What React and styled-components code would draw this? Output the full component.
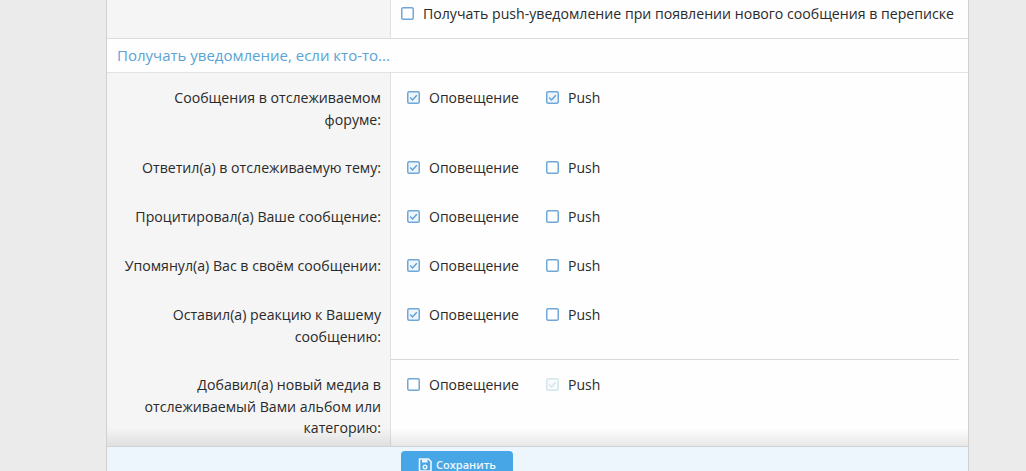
import React from "react";
import styled, { createGlobalStyle } from "styled-components";

const Global = createGlobalStyle`
  html, body { margin: 0; padding: 0; height: 471px; overflow: hidden; background: #ebebeb; }
  * { box-sizing: border-box; }
`;
const Page = styled.div`
  width: 1026px; height: 471px; overflow: hidden; padding: 0 57px 0 106px; position: relative;
  font: 14px/21.5px "Open Sans", "Noto Sans", sans-serif; color: #2a2a2a;
`;
const Panel = styled.div`
  height: 471px; width: 863px; background: #fefefe; border-left: 1px solid #d0d0d0; border-right: 1px solid #d0d0d0;
  display: flex; flex-direction: column; position: relative; overflow: hidden;
`;
const Row = styled.div`
  display: grid; grid-template-columns: 283px 1fr; flex: none;
`;
const Label = styled.div`
  background: #f5f5f5; text-align: right; padding: ${p => p.$top || 14}px 9px 0 10px; height: ${p => p.$h}px;
  font-size: 14.15px;
`;
const Control = styled.div`
  border-left: 1px solid #e0e0e0; padding: ${p => p.$top || 14}px 9px 0 ${p => p.$left || 16}px; position: relative;
`;
const Options = styled.div` display: flex; gap: 27px; `;
const Opt = styled.div` display: flex; align-items: center; gap: 9px; height: 22px; white-space: nowrap; `;
const NoticeOpt = styled(Opt)` font-size: 14.14px; `;
const Header = styled.div`
  height: 35px; flex: none; background: #fefefe; border-top: 1px solid #dcdcdc; border-bottom: 1px solid #e2e2e2;
  color: #5ba3d4; padding: 5px 10px; font-size: 15px; line-height: 23px;
`;
const Sep = styled.div`
  position: absolute; left: 0; right: 9px; bottom: 0; border-top: 1px solid #d8d8d8;
`;
const Shade = styled.div`
  position: absolute; left: 0; right: 0; bottom: 25px; height: 18px;
  background: linear-gradient(to bottom, rgba(0,0,0,0), rgba(0,0,0,0.09));
`;
const Footer = styled.div`
  position: absolute; left: 0; right: 0; bottom: 0; height: 25px; background: #edf6fd; border-top: 1px solid #cfd3d6;
  padding: 4px 0 0 294px;
`;
const Button = styled.div`
  width: 112px; height: 32px; background: #47a6e6; color: #eef7fd; border-radius: 4px;
  display: flex; justify-content: center; gap: 4px; padding-top: 4px; font-size: 11px; line-height: 20px; font-weight: 600;
`;

const Box = ({ checked, faded }) => (
  <svg width="13" height="13" viewBox="0 0 13 13" style={{ flex: "none", opacity: faded ? 0.35 : 1, marginTop: -1 }}>
    <rect x="0.75" y="0.75" width="11.5" height="11.5" rx="1.5" fill={checked ? "#eef5fb" : "#fff"} stroke={faded ? "#8bc" : "#6fa8d8"} strokeWidth="1.5" />
    {checked && <path d="M3.2 6.6 L5.5 8.9 L9.8 4.2" fill="none" stroke={faded ? "#8bc" : "#5f9fd6"} strokeWidth="1.4" />}
  </svg>
);
const Save = () => (
  <svg width="14" height="14" viewBox="0 0 14 14" style={{ flex: "none", marginTop: 3 }}>
    <path d="M1.5 1h9l2.5 2.5v9.5h-11.5z" fill="none" stroke="#eef7fd" strokeWidth="1.6" />
    <rect x="4" y="1.5" width="5.5" height="3" fill="#eef7fd" />
    <circle cx="7" cy="9" r="1.8" fill="none" stroke="#eef7fd" strokeWidth="1.4" />
  </svg>
);
const Pair = ({ a, p, pf }) => (
  <Options>
    <Opt><Box checked={a} />Оповещение</Opt>
    <Opt><Box checked={p} faded={pf} />Push</Opt>
  </Options>
);

const rows = [
  { t: <>Сообщения в отслеживаемом<br />форуме:</>, h: 70, a: true, p: true },
  { t: "Ответил(а) в отслеживаемую тему:", h: 49, a: true },
  { t: "Процитировал(а) Ваше сообщение:", h: 49, a: true },
  { t: "Упомянул(а) Вас в своём сообщении:", h: 49, a: true },
  { t: <>Оставил(а) реакцию к Вашему<br />сообщению:</>, h: 70, a: true, sep: true },
  { t: <>Добавил(а) новый медиа в<br />отслеживаемый Вами альбом или<br />категорию:</>, h: 96, p: true, pf: true },
];

export default function App() {
  return (
    <Page>
      <Global />
      <Panel>
        <Row>
          <Label $h={38} $top={4} />
          <Control $top={3} $left={10}>
            <NoticeOpt><Box />Получать push-уведомление при появлении нового сообщения в переписке</NoticeOpt>
          </Control>
        </Row>
        <Header>Получать уведомление, если кто-то...</Header>
        {rows.map((r, i) => (
          <Row key={i}>
            <Label $h={r.h}>{r.t}</Label>
            <Control><Pair a={r.a} p={r.p} pf={r.pf} />{r.sep && <Sep />}</Control>
          </Row>
        ))}
        <Shade />
        <Footer><Button><Save />Сохранить</Button></Footer>
      </Panel>
    </Page>
  );
}
